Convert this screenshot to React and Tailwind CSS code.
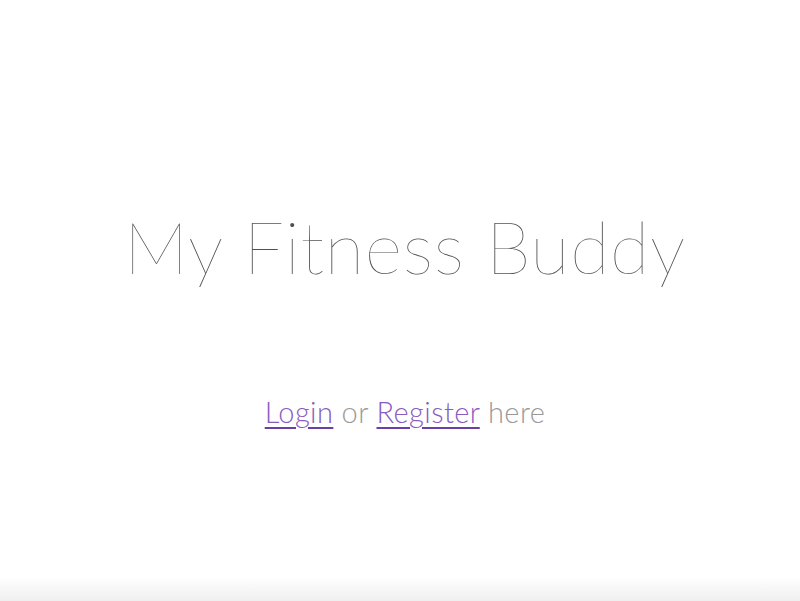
export default function App() {
  return (
    <div className="w-[800px] h-[601px] bg-white flex flex-col" style={{ fontFamily: "Lato, 'Open Sans', sans-serif" }}>
      <div className="flex-1 flex flex-col items-center pl-[10px]">
        <h1 className="mt-[201px] text-[72px] leading-[90px] font-thin text-[#4f5254] tracking-[0.8px]">My Fitness Buddy</h1>
        <p className="mt-[103px] text-[29px] leading-[36px] font-light text-[#9a9a9a] tracking-[0.4px]">
          <a href="#" className="text-[#8a5cc0] underline decoration-[#6b3fa8] decoration-2 underline-offset-4">Login</a>
          {" or "}
          <a href="#" className="text-[#8a5cc0] underline decoration-[#6b3fa8] decoration-2 underline-offset-4">Register</a>
          {" here"}
        </p>
      </div>
      <div className="h-[24px] bg-gradient-to-b from-white to-[#efefef]"></div>
    </div>
  );
}
